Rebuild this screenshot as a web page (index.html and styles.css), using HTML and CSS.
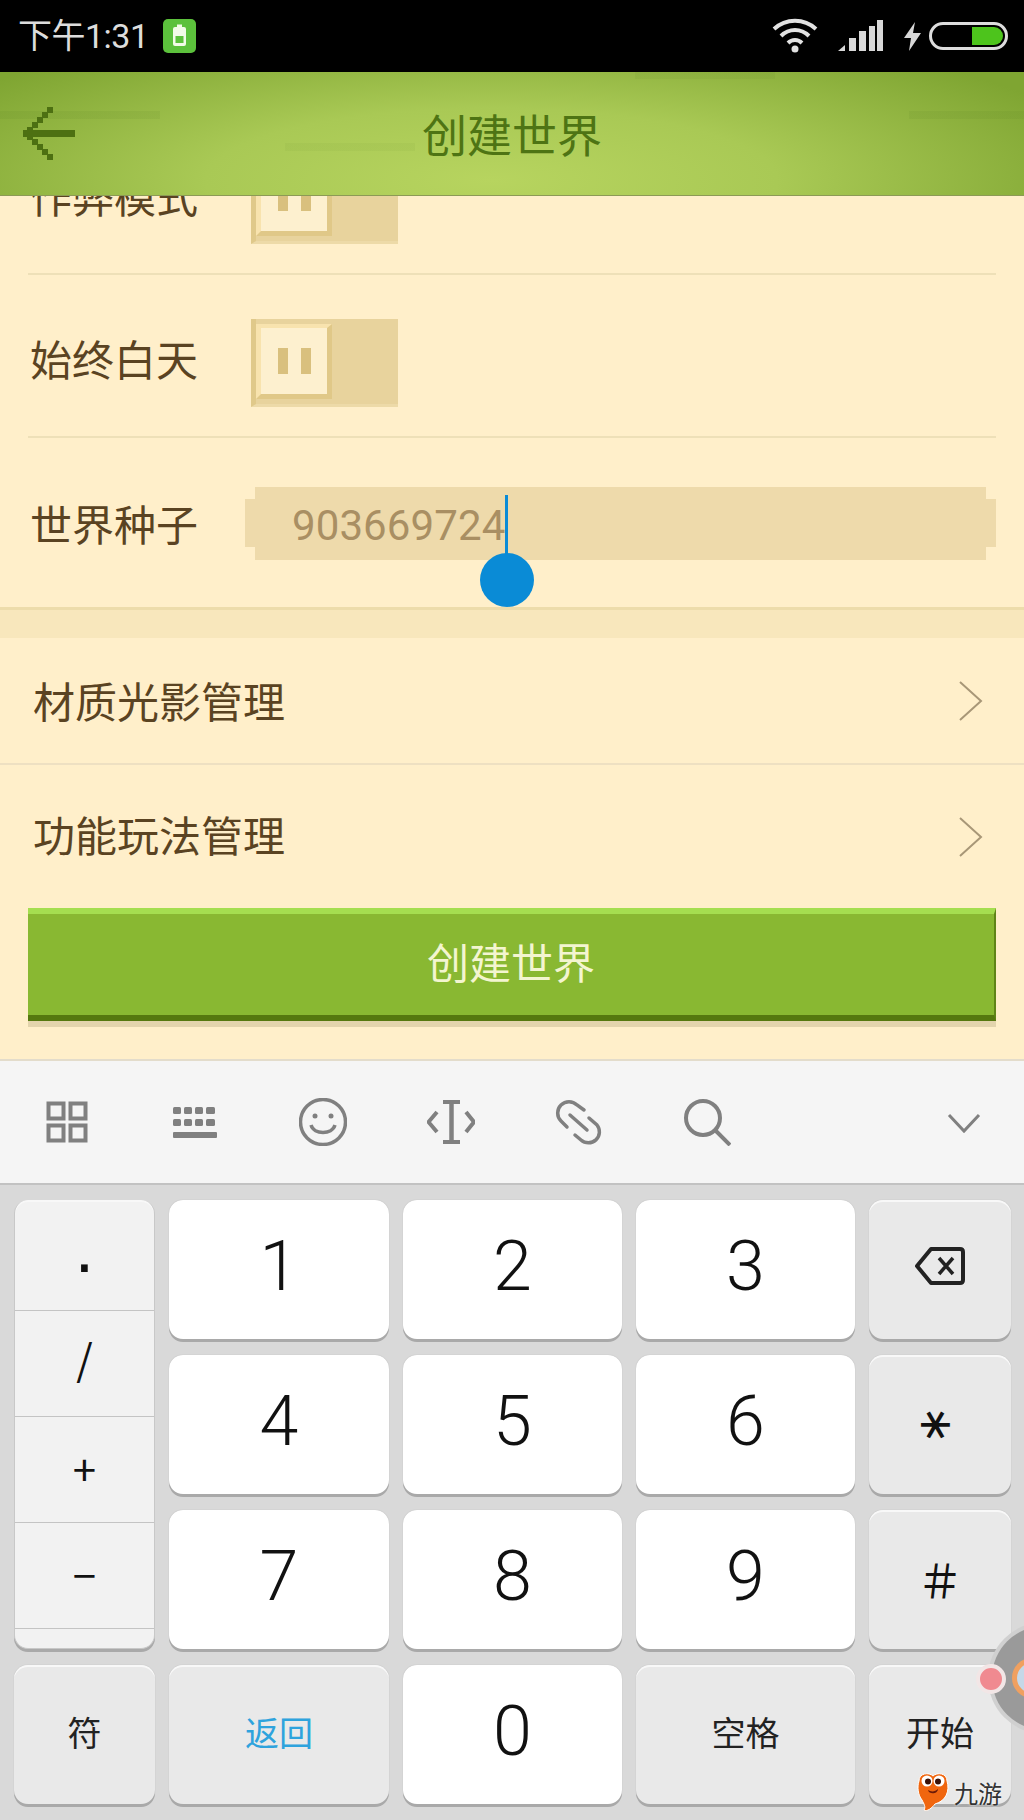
FILE: index.html
```html
<!DOCTYPE html>
<html lang="zh-CN">

<head>
    <meta charset="UTF-8">
    <meta name="viewport" content="width=device-width, initial-scale=1.0">
    <title>创建世界</title>
    <link rel="stylesheet" href="styles.css">
</head>

<body>
    <div class="status-bar">
        <span class="status-time">下午1:31</span>
        <svg class="status-badge" width="33" height="34" viewBox="0 0 33 34">
            <rect width="33" height="34" rx="5" fill="#5cc13c" />
            <rect x="10" y="8" width="13" height="19" rx="2" fill="#f2fbe8" />
            <rect x="14" y="5.5" width="5" height="3" fill="#f2fbe8" />
            <rect x="12.5" y="17" width="8" height="7" fill="#5cc13c" />
        </svg>
        <div class="status-right">
            <svg width="46" height="36" viewBox="0 0 46 36" fill="none" stroke="#e2e2e2" stroke-width="4">
                <path d="M2 11 C14 0 32 0 44 11" />
                <path d="M9 18 C17 10 29 10 37 18" />
                <path d="M16 25 C20 21 26 21 30 25" />
                <circle cx="23" cy="31" r="3.5" fill="#e2e2e2" stroke="none" />
            </svg>
            <svg class="status-signal" width="46" height="32" viewBox="0 0 46 32" fill="#d8d8d8">
                <path d="M0 31 L7 25 V31 Z" />
                <rect x="11" y="18" width="7" height="13" />
                <rect x="21" y="11" width="7" height="20" />
                <rect x="31" y="6" width="6" height="25" />
                <rect x="39" y="0" width="6" height="31" />
            </svg>
            <svg class="status-bolt" width="17" height="29" viewBox="0 0 17 29" fill="#d8d8d8">
                <path d="M11 0 L0 16 H7 L5 29 L17 11 H9 Z" />
            </svg>
            <div class="status-battery"><div class="status-battery-fill"></div></div>
        </div>
    </div>

    <header class="app-header">
        <svg class="back-icon" width="52" height="54" viewBox="0 0 52 54" fill="#4d7012">
            <rect x="0" y="23" width="52" height="7" />
            <rect x="4" y="20" width="6" height="13" />
            <rect x="9" y="15" width="6" height="6" />
            <rect x="14" y="10" width="6" height="6" />
            <rect x="19" y="5" width="6" height="6" />
            <rect x="24" y="0" width="6" height="6" />
            <rect x="9" y="32" width="6" height="6" />
            <rect x="14" y="37" width="6" height="6" />
            <rect x="19" y="42" width="6" height="6" />
            <rect x="24" y="47" width="6" height="6" />
        </svg>
        <h1 class="app-title">创建世界</h1>
    </header>

    <main class="content">
        <div class="form-scroll">
            <div class="form-row">
                <span class="form-label">作弊模式</span>
                <div class="toggle"><div class="toggle-knob"><i></i><i></i></div></div>
            </div>
            <div class="form-row">
                <span class="form-label">始终白天</span>
                <div class="toggle"><div class="toggle-knob"><i></i><i></i></div></div>
            </div>
            <div class="form-row form-row-last">
                <span class="form-label">世界种子</span>
                <div class="seed-input">
                    <span class="seed-value">903669724</span><span class="seed-caret"><span class="seed-handle"></span></span>
                </div>
            </div>
        </div>
        <div class="section-gap"></div>
        <div class="link-row link-row-first">
            <span>材质光影管理</span>
            <svg width="24" height="40" viewBox="0 0 24 40" fill="none" stroke="#a89777" stroke-width="2"><path d="M1 1 L22 20 L1 39" /></svg>
        </div>
        <div class="link-row link-row-second">
            <span>功能玩法管理</span>
            <svg width="24" height="40" viewBox="0 0 24 40" fill="none" stroke="#a89777" stroke-width="2"><path d="M1 1 L22 20 L1 39" /></svg>
        </div>
        <div class="create-wrap">
            <button class="create-btn">创建世界</button>
        </div>
    </main>

    <div class="kb-toolbar">
        <svg class="kb-icon" viewBox="0 0 48 48" fill="none" stroke="#808080" stroke-width="4">
            <rect x="5.5" y="5.5" width="15" height="15" />
            <rect x="27.5" y="5.5" width="15" height="15" />
            <rect x="5.5" y="27.5" width="15" height="15" />
            <rect x="27.5" y="27.5" width="15" height="15" />
        </svg>
        <svg class="kb-icon" viewBox="0 0 48 48" fill="#808080">
            <rect x="2" y="9" width="8" height="7" rx="1.5" />
            <rect x="13" y="9" width="8" height="7" rx="1.5" />
            <rect x="24" y="9" width="8" height="7" rx="1.5" />
            <rect x="35" y="9" width="9" height="7" rx="1.5" />
            <rect x="2" y="21" width="8" height="7" rx="1.5" />
            <rect x="13" y="21" width="8" height="7" rx="1.5" />
            <rect x="24" y="21" width="8" height="7" rx="1.5" />
            <rect x="35" y="21" width="9" height="7" rx="1.5" />
            <rect x="2" y="34" width="44" height="6" rx="1" />
        </svg>
        <svg class="kb-icon" viewBox="0 0 48 48" fill="none" stroke="#808080" stroke-width="3.5">
            <circle cx="24" cy="24" r="22.5" />
            <circle cx="16" cy="18" r="2.5" fill="#808080" stroke="none" />
            <circle cx="32" cy="18" r="2.5" fill="#808080" stroke="none" />
            <path d="M12 27 C15 37 33 37 36 27" />
        </svg>
        <svg class="kb-icon" viewBox="0 0 48 48" fill="none" stroke="#808080" stroke-width="4">
            <path d="M16 4 H33 M16 44 H33" />
            <path d="M24.5 4 V44" stroke-width="4.5" />
            <path d="M10 14 L1.5 24 L10 34" />
            <path d="M39 14 L47 24 L39 34" />
        </svg>
        <svg class="kb-icon" viewBox="0 0 48 48" fill="none" stroke="#808080" stroke-width="3.5" stroke-linecap="round">
            <path d="M12 29 L6 23 A11 11 0 0 1 22 7 L29 12" />
            <path d="M34 20 L42 27 A11 11 0 0 1 26 42 L20 37" />
            <path d="M15 17 L32 32" />
        </svg>
        <svg class="kb-icon" viewBox="0 0 48 48" fill="none" stroke="#808080" stroke-width="4">
            <circle cx="20" cy="20" r="17" />
            <path d="M32 32 L47 47" />
        </svg>
        <svg class="kb-icon kb-icon-close" viewBox="0 0 48 48" fill="none" stroke="#808080" stroke-width="3">
            <path d="M9 17 L24 33 L39 17" />
        </svg>
    </div>

    <div class="keyboard">
        <div class="key-side">
            <div class="side-item side-item-dot">·</div>
            <div class="side-item side-item-slash">/</div>
            <div class="side-item">+</div>
            <div class="side-item">−</div>
            <div class="side-stub"></div>
        </div>
        <div class="key key-num">1</div>
        <div class="key key-num">2</div>
        <div class="key key-num">3</div>
        <div class="key key-fn key-back">
            <svg width="50" height="38" viewBox="0 0 50 38" fill="none" stroke="#222" stroke-width="4">
                <path d="M16 2 H45 Q48 2 48 5 V33 Q48 36 45 36 H16 L2 19 Z" stroke-linejoin="round" />
                <path d="M24 11 L38 27 M38 11 L24 27" stroke-width="3.5" />
            </svg>
        </div>
        <div class="key key-num">4</div>
        <div class="key key-num">5</div>
        <div class="key key-num">6</div>
        <div class="key key-fn"><span class="key-star">∗</span></div>
        <div class="key key-num">7</div>
        <div class="key key-num">8</div>
        <div class="key key-num">9</div>
        <div class="key key-fn key-hash">＃</div>
        <div class="key key-fn key-label">符</div>
        <div class="key key-fn key-label key-return">返回</div>
        <div class="key key-num">0</div>
        <div class="key key-fn key-label">空格</div>
        <div class="key key-fn key-label">开始</div>
    </div>

    <div class="float-ball">
        <div class="float-ball-inner"><div class="float-ball-logo"></div></div>
    </div>
    <div class="float-dot"></div>

    <div class="watermark">
        <svg width="32" height="40" viewBox="0 0 32 40">
            <path d="M2 9 C2 1 12 0 16 4 C20 0 30 1 30 9 C33 19 29 29 18 32 C15 36 10 40 7 38 C9 35 7 32 5 28 C1 23 0 15 2 9 Z" fill="#f0660f" stroke="#fff" stroke-width="1" />
            <circle cx="10" cy="9" r="5.5" fill="#fff" />
            <circle cx="22" cy="9" r="5.5" fill="#fff" />
            <circle cx="11" cy="9.5" r="3" fill="#3a1208" />
            <circle cx="21" cy="9.5" r="3" fill="#3a1208" />
            <path d="M11 18 C14 20 18 20 21 17 C21 22 12 23 11 18 Z" fill="#6b1a08" />
        </svg>
        <span>九游</span>
    </div>
</body>

</html>
```

FILE: styles.css
```css
html, body {
    margin: 0;
    padding: 0;
}

body {
    position: relative;
    width: 1024px;
    height: 1820px;
    overflow: hidden;
    font-family: "Noto Sans CJK SC", "Noto Sans", sans-serif;
    background-color: #d9d9d9;
}

/* status bar */
.status-bar {
    display: flex;
    align-items: center;
    height: 72px;
    padding: 0 16px 0 18px;
    box-sizing: border-box;
    background-color: #000;
    color: #ddd;
}

.status-time {
    font-family: Roboto, "Noto Sans CJK SC", sans-serif;
    font-size: 34px;
    line-height: 72px;
    letter-spacing: -0.5px;
}

.status-badge {
    margin-left: 14px;
}

.status-right {
    display: flex;
    align-items: center;
    margin-left: auto;
}

.status-signal {
    margin-left: 20px;
}

.status-bolt {
    margin-left: 20px;
}

.status-battery {
    display: flex;
    justify-content: flex-end;
    width: 79px;
    height: 28px;
    margin-left: 8px;
    padding: 2px;
    box-sizing: border-box;
    border: 3px solid #ddd;
    border-radius: 14px;
}

.status-battery-fill {
    width: 31px;
    height: 18px;
    background-color: #4dc41c;
    border-radius: 0 9px 9px 0;
}

/* header */
.app-header {
    position: relative;
    z-index: 1;
    display: flex;
    align-items: center;
    justify-content: center;
    height: 124px;
    box-sizing: border-box;
    border-bottom: 1px solid #8c9a55;
    background-color: #82a836;
    background-image:
        linear-gradient(rgba(80, 120, 30, 0.1), rgba(80, 120, 30, 0.1)),
        linear-gradient(rgba(80, 120, 30, 0.1), rgba(80, 120, 30, 0.1)),
        linear-gradient(rgba(80, 120, 30, 0.08), rgba(80, 120, 30, 0.08)),
        linear-gradient(rgba(80, 120, 30, 0.06), rgba(80, 120, 30, 0.06)),
        radial-gradient(ellipse 62% 130% at 48% 88%, #b7d45f 0%, #a9c955 45%, #7fa532 100%);
    background-repeat: no-repeat;
    background-size: 160px 8px, 115px 8px, 140px 7px, 130px 8px, 100% 100%;
    background-position: 0 39px, 909px 39px, 635px 0, 285px 71px, 0 0;
}

.back-icon {
    position: absolute;
    left: 23px;
    top: 35px;
}

.app-title {
    margin: 0;
    font-size: 45px;
    font-weight: 400;
    line-height: 60px;
    color: #4e7414;
}

/* form */
.content {
    height: 863px;
    overflow: hidden;
    background-color: #ffefca;
    border-bottom: 2px solid #e3dccb;
}

.form-scroll {
    margin-top: -84px;
    padding: 0 28px;
}

.form-row {
    display: flex;
    align-items: center;
    height: 161px;
    border-bottom: 2px solid #eee0b8;
}

.form-row-last {
    height: 169px;
    border-bottom: 0;
}

.form-label {
    flex: none;
    width: 223px;
    margin-top: 5px;
    padding-left: 2px;
    box-sizing: border-box;
    font-size: 42px;
    line-height: 56px;
    color: #5a4322;
}

.form-row-last .form-label {
    margin-top: 1px;
}

.toggle {
    align-self: flex-start;
    width: 147px;
    height: 88px;
    margin-top: 44px;
    padding: 5px 0 0 5px;
    box-sizing: border-box;
    background-color: #e8d39d;
    border-left: 5px solid #e0c98a;
    border-bottom: 3px solid #eddaa8;
}

.toggle-knob {
    display: flex;
    align-items: center;
    justify-content: center;
    gap: 13px;
    width: 76px;
    height: 75px;
    box-sizing: border-box;
    background-color: #fdf0cf;
    border-top: 4px solid #f8e3ae;
    border-left: 5px solid #f8e3ae;
    border-right: 5px solid #e0c888;
    border-bottom: 5px solid #e0c888;
    margin-left: -5px;
}

.toggle-knob i {
    display: block;
    width: 10px;
    height: 26px;
    background-color: #d9c07e;
}

.seed-input {
    position: relative;
    display: flex;
    align-items: center;
    flex: 1;
    height: 73px;
    margin: 1px 10px 0 4px;
    padding: 0 0 0 37px;
    background-color: #eedaab;
}

.seed-input::before {
    content: "";
    position: absolute;
    left: -10px;
    right: -10px;
    top: 12px;
    bottom: 13px;
    background-color: #eedaab;
}

.seed-value {
    position: relative;
    margin-top: 4px;
    font-family: Roboto, sans-serif;
    font-size: 42px;
    letter-spacing: 0.1px;
    color: #a98f63;
}

.seed-caret {
    position: relative;
    width: 3px;
    height: 60px;
    margin-top: 3px;
    background-color: #0a8bd6;
}

.seed-handle {
    position: absolute;
    left: -25px;
    top: 58px;
    width: 54px;
    height: 54px;
    border-radius: 50%;
    background-color: #0a8bd6;
}

.section-gap {
    height: 28px;
    background-color: #f8e7bc;
    border-top: 3px solid #eddcab;
}

.link-row {
    display: flex;
    align-items: center;
    justify-content: space-between;
    padding: 0 41px 0 33px;
    font-size: 42px;
    color: #5a4322;
}

.link-row-first {
    height: 125px;
    border-bottom: 2px solid #eee0c2;
}

.link-row-first span {
    margin-bottom: 2px;
}

.link-row-second {
    height: 143px;
}

.link-row-second span {
    margin-bottom: 6px;
}

.create-wrap {
    padding: 0 28px;
}

.create-btn {
    display: block;
    width: 100%;
    height: 113px;
    padding: 0 0 8px;
    font-family: inherit;
    font-size: 42px;
    color: #f3f5d0;
    background-color: #89b832;
    border: 0;
    border-top: 6px solid #a5de50;
    border-bottom: 6px solid #55780f;
    border-right: 2px solid #5f8418;
    box-shadow: 0 6px 0 #e3d4ad;
}

/* keyboard */
.kb-toolbar {
    display: flex;
    align-items: center;
    gap: 80px;
    height: 124px;
    padding: 0 36px 0 43px;
    box-sizing: border-box;
    background-color: #f5f5f5;
    border-bottom: 2px solid #c2c2c2;
}

.kb-icon {
    flex: none;
    width: 48px;
    height: 48px;
}

.kb-icon-close {
    margin-left: auto;
}

.keyboard {
    display: grid;
    grid-template-columns: 141px 220px 219px 219px 142px;
    grid-template-rows: repeat(4, 139px);
    column-gap: 14px;
    row-gap: 16px;
    padding: 15px 13px 0 14px;
}

.key {
    display: flex;
    align-items: center;
    justify-content: center;
    border-radius: 14px;
    box-shadow: 0 3px 0 #a9a9a9, 0 0 1px #a9a9a9;
    color: #111;
}

.key-num {
    padding-bottom: 8px;
    box-sizing: border-box;
    background-color: #fff;
    font-family: Roboto, sans-serif;
    font-size: 70px;
    font-weight: 300;
}

.key-fn {
    background-color: #e9e9e9;
    box-shadow: inset 0 2px 0 #f8f8f8, 0 3px 0 #a9a9a9, 0 0 1px #a9a9a9;
}

.key-back {
    padding-bottom: 8px;
    box-sizing: border-box;
}

.key-star {
    display: block;
    margin-right: 6px;
    font-family: "DejaVu Sans", sans-serif;
    font-size: 46px;
    line-height: 46px;
    transform: rotate(90deg);
}

.key-hash {
    padding-bottom: 4px;
    box-sizing: border-box;
    font-size: 46px;
}

.key-label {
    padding-bottom: 6px;
    box-sizing: border-box;
    font-size: 34px;
    color: #222;
}

.key-return {
    color: #2ea3dd;
}

.key-side {
    display: flex;
    flex-direction: column;
    grid-row: span 3;
    overflow: hidden;
    box-sizing: border-box;
    border: 1px solid #c8c8c8;
    border-top: 0;
    border-radius: 14px;
    background-color: #f2f2f2;
    box-shadow: inset 0 2px 0 #f8f8f8, 0 3px 0 #a9a9a9;
}

.side-item {
    display: flex;
    align-items: center;
    justify-content: center;
    flex: none;
    height: 100px;
    padding-bottom: 5px;
    border-bottom: 1px solid #c4c4c4;
    font-family: "Noto Sans CJK SC", sans-serif;
    font-size: 42px;
    color: #111;
}

.side-item-dot {
    height: 111px;
    padding: 16px 0 0;
    box-sizing: border-box;
    font-family: "Liberation Sans", sans-serif;
    font-size: 70px;
}

.side-item-slash {
    height: 91px;
    padding-bottom: 14px;
}

/* overlays */
.float-ball {
    position: absolute;
    left: 988px;
    top: 1622px;
    width: 112px;
    height: 112px;
    padding: 4px;
    box-sizing: border-box;
    border-radius: 50%;
    background-color: #d0d0d0;
}

.float-ball-inner {
    display: flex;
    align-items: center;
    width: 104px;
    height: 104px;
    padding-left: 20px;
    box-sizing: border-box;
    border-radius: 50%;
    background-color: #9a9a9a;
}

.float-ball-logo {
    width: 40px;
    height: 40px;
    box-sizing: border-box;
    border: 5px solid #f0a060;
    border-radius: 50%;
    background-color: #c5d8e8;
}

.float-dot {
    position: absolute;
    left: 976px;
    top: 1664px;
    width: 22px;
    height: 22px;
    border: 4px solid #f2e6e6;
    border-radius: 50%;
    background-color: #f08a90;
}

.watermark {
    position: absolute;
    left: 917px;
    top: 1772px;
    display: flex;
    align-items: center;
    gap: 5px;
    font-size: 24px;
    color: #333;
    text-shadow: 0 0 3px #fff;
}
```
